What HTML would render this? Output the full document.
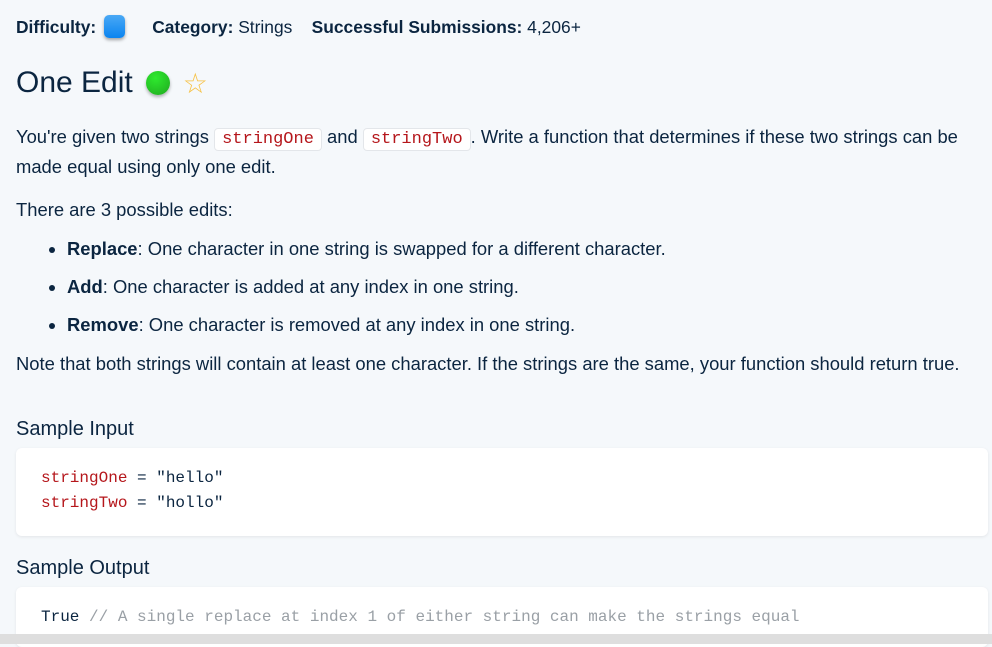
<!DOCTYPE html>
<html><head><meta charset="utf-8"><style>
body{margin:0;width:992px;height:644px;overflow:hidden;background:#f5f8fb;font-family:"Liberation Sans",sans-serif;color:#0b2540;position:relative}
.wrap{position:absolute;left:16px;top:0;width:972px}
.meta{position:absolute;top:15px;left:0;font-size:17.4px;white-space:nowrap}
.meta b{font-weight:bold}
.sq{display:inline-block;width:21px;height:23px;border-radius:5px;background:linear-gradient(#4aa9f5,#0a84f0);box-shadow:0 2px 3px rgba(0,0,0,.35);vertical-align:-5px;margin:0 27px 0 8px}
h1{position:absolute;top:64px;left:0;margin:0;font-weight:normal;font-size:30px;line-height:38px;white-space:nowrap}
.dot{display:inline-block;width:24px;height:24px;border-radius:50%;background:radial-gradient(circle at 40% 30%,#2eea2e,#1fa81f);box-shadow:0 2px 3px rgba(0,0,0,.3);vertical-align:-3px;margin-left:13px}
.star{color:#f6c143;font-size:28px;margin-left:13px;vertical-align:-1px}
p,li{font-size:18.4px;margin:0;line-height:30px}
code{font-family:"Liberation Mono",monospace;color:#b5161b;background:#fff;border:1px solid #e3e6ea;border-radius:4px;padding:1px 7px;font-size:17px}
.t{position:absolute;left:0;white-space:nowrap}
ul{position:absolute;left:0;top:234px;margin:0;padding-left:51px}
ul li{margin-bottom:8px}
h3{position:absolute;left:0;margin:0;font-weight:normal;font-size:20px}
.box{position:absolute;left:0;width:972px;background:#fff;border-radius:6px;box-shadow:0 1px 3px rgba(0,0,0,.08);font-family:"Liberation Mono",monospace;font-size:16px;line-height:25px;padding-left:25px;box-sizing:border-box}
.r{color:#b5161b}.c{color:#9aa0a6}
.bar{position:absolute;left:0;top:634px;width:992px;height:10px;background:#dedede}
</style></head><body>
<div class="wrap">
<div class="meta"><b>Difficulty:</b><span class="sq"></span><b>Category:</b> Strings &nbsp;&nbsp; <b>Successful Submissions:</b> 4,206+</div>
<h1>One Edit<span class="dot"></span><span class="star">☆</span></h1>
<p class="t" style="top:122px">You're given two strings <code>stringOne</code> and <code>stringTwo</code>. Write a function that determines if these two strings can be</p>
<p class="t" style="top:152px">made equal using only one edit.</p>
<p class="t" style="top:195px">There are 3 possible edits:</p>
<ul>
<li><b>Replace</b>: One character in one string is swapped for a different character.</li>
<li><b>Add</b>: One character is added at any index in one string.</li>
<li><b>Remove</b>: One character is removed at any index in one string.</li>
</ul>
<p class="t" style="top:349px">Note that both strings will contain at least one character. If the strings are the same, your function should return true.</p>
<h3 style="top:418px">Sample Input</h3>
<div class="box" style="top:448px;height:88px;padding-top:18px"><span class="r">stringOne</span> = "hello"<br><span class="r">stringTwo</span> = "hollo"</div>
<h3 style="top:557px">Sample Output</h3>
<div class="box" style="top:587px;height:60px;padding-top:18px">True <span class="c">// A single replace at index 1 of either string can make the strings equal</span></div>
</div>
<div class="bar"></div>
</body></html>
